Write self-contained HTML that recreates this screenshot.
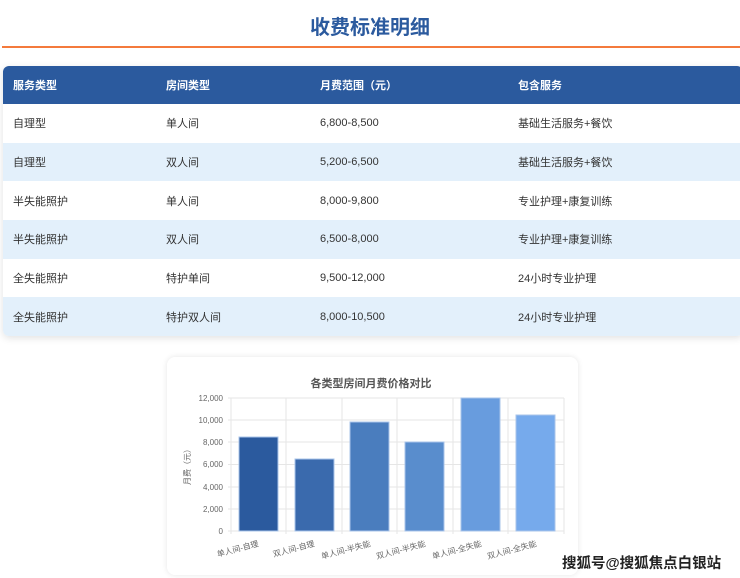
<!DOCTYPE html><html><head><meta charset="utf-8"><style>
html,body{margin:0;width:740px;height:578px;overflow:hidden}
body{background:#fff;font-family:"Liberation Sans","Noto Sans CJK SC",sans-serif;position:relative}
h1{position:absolute;top:11px;left:0;width:740px;text-align:center;margin:0;font-size:20px;color:#2b5a9e;font-weight:bold}
.line{position:absolute;top:46px;left:2px;width:738px;height:2px;background:#f47a3c}
.tbl{position:absolute;top:66px;left:3px;width:740px;border-radius:6px;overflow:hidden;box-shadow:0 2px 8px rgba(0,0,0,.12)}
.row{height:38.7px;position:relative;font-size:11px;color:#333}
.row span{position:absolute;top:50%;transform:translateY(-50%)}
.hd{background:#2b5a9e;color:#fff;font-weight:bold;height:38px}
.alt{background:#e3f0fb}
.c1{left:10px}.c2{left:163px}.c3{left:317px}.c4{left:515px}
.card{position:absolute;left:167px;top:357px;width:411px;height:218px;border-radius:8px;background:#fff;box-shadow:0 0 6px rgba(0,0,0,.1)}
.wm{position:absolute;left:562px;top:552px;font-size:14.5px;color:#222;font-weight:bold;text-shadow:0 0 2px #fff,0 0 2px #fff}
</style></head><body>
<h1>收费标准明细</h1>
<div class="line"></div>
<div class="tbl">
<div class="row hd"><span class="c1">服务类型</span><span class="c2">房间类型</span><span class="c3">月费范围（元）</span><span class="c4">包含服务</span></div>
<div class="row"><span class="c1">自理型</span><span class="c2">单人间</span><span class="c3">6,800-8,500</span><span class="c4">基础生活服务+餐饮</span></div>
<div class="row alt"><span class="c1">自理型</span><span class="c2">双人间</span><span class="c3">5,200-6,500</span><span class="c4">基础生活服务+餐饮</span></div>
<div class="row"><span class="c1">半失能照护</span><span class="c2">单人间</span><span class="c3">8,000-9,800</span><span class="c4">专业护理+康复训练</span></div>
<div class="row alt"><span class="c1">半失能照护</span><span class="c2">双人间</span><span class="c3">6,500-8,000</span><span class="c4">专业护理+康复训练</span></div>
<div class="row"><span class="c1">全失能照护</span><span class="c2">特护单间</span><span class="c3">9,500-12,000</span><span class="c4">24小时专业护理</span></div>
<div class="row alt"><span class="c1">全失能照护</span><span class="c2">特护双人间</span><span class="c3">8,000-10,500</span><span class="c4">24小时专业护理</span></div>
</div>
<div class="card"></div>
<svg style="position:absolute;left:0;top:0" width="740" height="578" font-family="Liberation Sans,Noto Sans CJK SC,sans-serif">
<text x="371" y="387" text-anchor="middle" font-size="11" font-weight="bold" fill="#555">各类型房间月费价格对比</text>
<g stroke="#e6e6e6" stroke-width="1">
<line x1="228" y1="398" x2="564" y2="398"/><line x1="228" y1="420" x2="564" y2="420"/><line x1="228" y1="442" x2="564" y2="442"/><line x1="228" y1="464.5" x2="564" y2="464.5"/><line x1="228" y1="487" x2="564" y2="487"/><line x1="228" y1="509" x2="564" y2="509"/><line x1="228" y1="531" x2="564" y2="531"/>
<line x1="231" y1="398" x2="231" y2="534"/><line x1="286" y1="398" x2="286" y2="534"/><line x1="342" y1="398" x2="342" y2="534"/><line x1="397" y1="398" x2="397" y2="534"/><line x1="453" y1="398" x2="453" y2="534"/><line x1="508" y1="398" x2="508" y2="534"/><line x1="564" y1="398" x2="564" y2="534"/>
</g>
<g font-size="8" fill="#666" text-anchor="end">
<text x="223" y="401">12,000</text><text x="223" y="423">10,000</text><text x="223" y="445">8,000</text><text x="223" y="467">6,000</text><text x="223" y="490">4,000</text><text x="223" y="512">2,000</text><text x="223" y="534">0</text>
</g>
<text transform="translate(190,465) rotate(-90)" text-anchor="middle" font-size="8" fill="#666">月费（元）</text>
<g stroke-width="1">
<rect x="239" y="437" width="39" height="94" fill="#2b5a9e" stroke="#a9c4ea"/>
<rect x="295" y="459" width="39" height="72" fill="#3a6aad" stroke="#a9c4ea"/>
<rect x="350" y="422" width="39" height="109" fill="#4a7dbe" stroke="#a9c4ea"/>
<rect x="405" y="442" width="39" height="89" fill="#598dcd" stroke="#a9c4ea"/>
<rect x="461" y="398" width="39" height="133" fill="#689cde" stroke="#a9c4ea"/>
<rect x="516" y="415" width="39" height="116" fill="#76aaec" stroke="#a9c4ea"/>
</g>
<g font-size="8" fill="#666" text-anchor="end">
<text transform="translate(259,546) rotate(-15)">单人间-自理</text>
<text transform="translate(315,546) rotate(-15)">双人间-自理</text>
<text transform="translate(371,546) rotate(-15)">单人间-半失能</text>
<text transform="translate(426,546) rotate(-15)">双人间-半失能</text>
<text transform="translate(482,546) rotate(-15)">单人间-全失能</text>
<text transform="translate(537,546) rotate(-15)">双人间-全失能</text>
</g>
</svg>
<div class="wm">搜狐号@搜狐焦点白银站</div>
</body></html>
